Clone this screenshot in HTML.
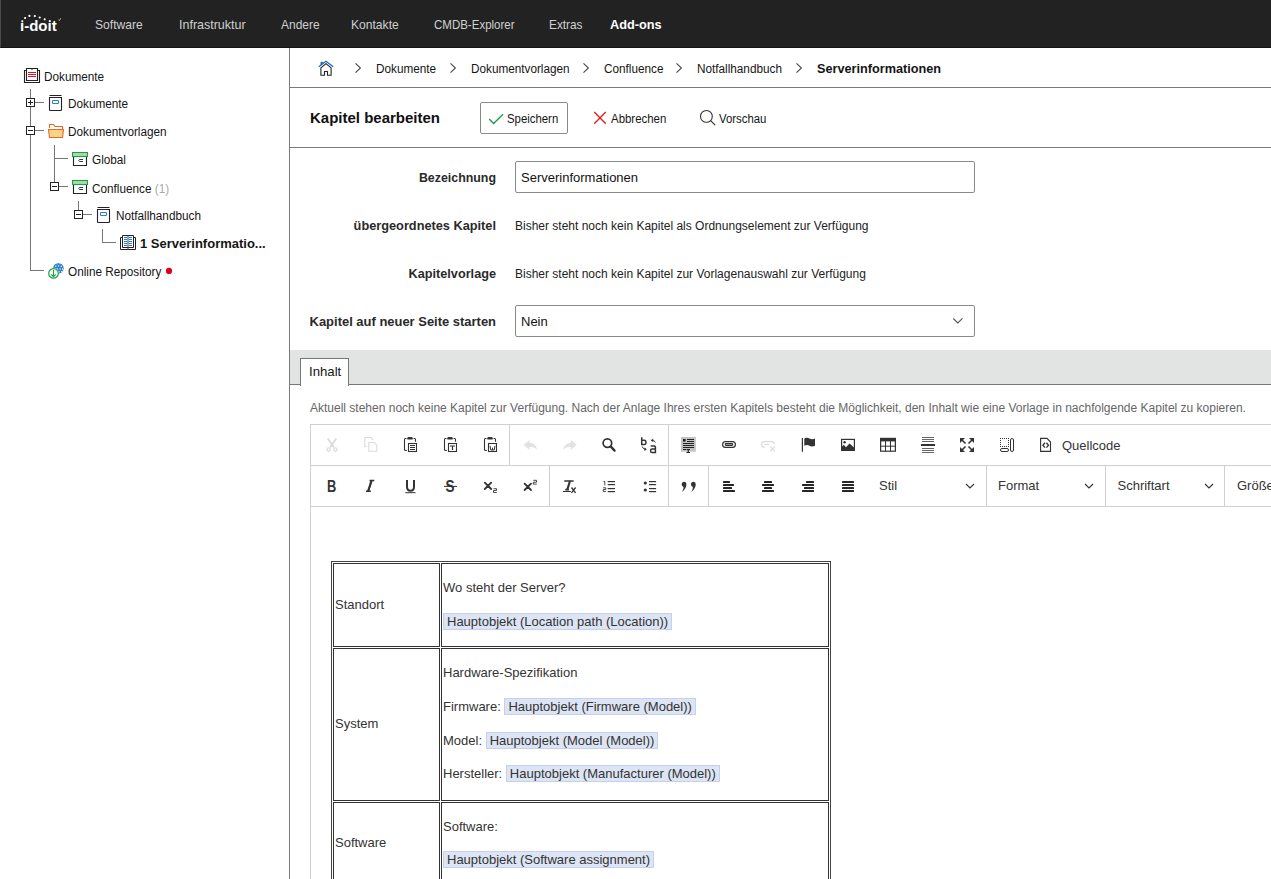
<!DOCTYPE html>
<html><head><meta charset="utf-8">
<style>
*{box-sizing:border-box;margin:0;padding:0}
html,body{width:1271px;height:879px;overflow:hidden;background:#fff;font-family:"Liberation Sans",sans-serif;color:#222}
.a{position:absolute;white-space:nowrap}
#nav{position:absolute;left:0;top:0;width:1271px;height:48px;background:#222;border-left:1px solid #4a4a4a;border-bottom:1px solid #131313;z-index:6}
#nav .it{position:absolute;top:18px;font-size:13px;color:#d0d0d0;line-height:14px;transform:scaleX(.9);transform-origin:0 0}
#side{position:absolute;left:0;top:47px;width:289px;height:832px;background:#fff}
#vline{position:absolute;left:289px;top:47px;width:1px;height:832px;background:#7a7a7a}
.hl{position:absolute;height:1px;background:#7a7a7a}
.t{position:absolute;font-size:12.5px;line-height:14px;color:#151515;white-space:nowrap;transform:scaleX(.94);transform-origin:0 0}
.lbl{position:absolute;font-size:12.4px;font-weight:bold;line-height:14px;color:#2a2a2a;text-align:right;white-space:nowrap}
.val{position:absolute;font-size:12px;line-height:14px;color:#222;white-space:nowrap}
.inp{position:absolute;border:1px solid #8a8a8a;border-radius:2px;background:#fff}

#ed{position:absolute;left:331px;top:561px;border:1px solid #444;border-spacing:1px;font-family:"Liberation Sans",sans-serif;font-size:13px;line-height:1.6;color:#333;background:#fff}
#ed td{border:1px solid #333;padding:1px;vertical-align:middle}
#ed p{margin:13px 0;white-space:nowrap}
#ed .ph{background:#dde5f4;border:1px solid #c3d1ee;padding:0 3px}
</style></head>
<body>
<div id="nav">
  <svg class="a" style="left:0;top:0" width="80" height="47" viewBox="0 0 80 47">
  <text x="19" y="31" font-family="Liberation Sans" font-weight="bold" font-size="15" fill="#fff">ı-doıt</text>
  <g fill="#fff"><circle cx="21.3" cy="21.3" r="1.1"/><circle cx="24.1" cy="18" r="1.1"/><circle cx="28.4" cy="15.9" r="1.1"/><circle cx="33.8" cy="16.1" r="1.1"/><circle cx="38.7" cy="17.5" r="1.1"/><circle cx="43.7" cy="19.3" r="1.1"/><circle cx="48.8" cy="21.2" r="1.1"/></g>
  <path d="M57.6 19.6L58.4 20.6L59.8 18.2" fill="none" stroke="#ddd" stroke-width="0.7"/>
</svg>
  <div class="it" style="left:94px;transform:scaleX(.93)">Software</div>
  <div class="it" style="left:177.5px;transform:scaleX(.96)">Infrastruktur</div>
  <div class="it" style="left:279.5px;transform:scaleX(.92)">Andere</div>
  <div class="it" style="left:350px;transform:scaleX(.93)">Kontakte</div>
  <div class="it" style="left:432.5px;transform:scaleX(.885)">CMDB-Explorer</div>
  <div class="it" style="left:547.5px;transform:scaleX(.91)">Extras</div>
  <div class="it" style="left:608.5px;color:#fff;font-weight:bold;transform:scaleX(.98)">Add-ons</div>
</div>
<div id="side"></div>
<div id="vline"></div>
<!-- sidebar tree -->
<svg class="a" style="left:0;top:0" width="289" height="300" viewBox="0 0 289 300" shape-rendering="crispEdges">
 <g fill="#777">
  <rect x="30" y="89" width="1" height="9"/><rect x="30" y="107" width="1" height="19"/><rect x="30" y="135" width="1" height="136"/>
  <rect x="35" y="102" width="9" height="1"/><rect x="35" y="130" width="9" height="1"/><rect x="31" y="270" width="13" height="1"/>
  <rect x="54" y="145" width="1" height="37"/><rect x="55" y="158" width="13" height="1"/><rect x="59" y="186" width="9" height="1"/>
  <rect x="78" y="201" width="1" height="9"/><rect x="83" y="214" width="9" height="1"/>
  <rect x="102" y="229" width="1" height="14"/><rect x="103" y="242" width="13" height="1"/>
 </g>
 <g fill="none" stroke="#222" stroke-width="1">
  <rect x="26.5" y="98.5" width="8" height="8"/><rect x="26.5" y="126.5" width="8" height="8"/>
  <rect x="50.5" y="182.5" width="8" height="8"/><rect x="74.5" y="210.5" width="8" height="8"/>
 </g>
 <g fill="#222">
  <rect x="28" y="102" width="5" height="1"/><rect x="30" y="100" width="1" height="5"/>
  <rect x="28" y="130" width="5" height="1"/><rect x="52" y="186" width="5" height="1"/><rect x="76" y="214" width="5" height="1"/>
 </g>
</svg>
<svg class="a" style="left:0;top:0" width="289" height="300" viewBox="0 0 289 300">
 <!-- root book -->
 <g fill="none" stroke="#222" stroke-width="1.1">
  <path d="M26.5 70.5 H24.5 V82.5 H39.5 V70.5 H37.5"/>
  <path d="M26.5 68.5 H31.5 L32 69.3 L32.5 68.5 H37.5 V80.5 H26.5 Z"/>
 </g>
 <g stroke="#e0101e" stroke-width="1.2"><path d="M28 72.5H36M28 74.5H36M28 76.5H36"/></g>
 <!-- doc icons -->
 <g fill="none" stroke="#222" stroke-width="1.1">
  <path d="M49.5 95.5H61.5M49.5 97.5H61.5V109.5Q61.5 110.5 60.5 110.5H50.5Q49.5 110.5 49.5 109.5Z"/>
  <path d="M97.5 207.5H109.5M97.5 209.5H109.5V221.5Q109.5 222.5 108.5 222.5H98.5Q97.5 222.5 97.5 221.5Z"/>
 </g>
 <g fill="none" stroke="#2a80d0" stroke-width="1.1">
  <rect x="52.5" y="100.5" width="6" height="3" rx="0.8"/>
  <rect x="100.5" y="212.5" width="6" height="3" rx="0.8"/>
 </g>
 <!-- folder -->
 <path d="M49.5 128V124.5H53.5L55 126.5H62.5V129" fill="none" stroke="#e86a25" stroke-width="1.1"/>
 <path d="M48.5 129.5H63.5L62.5 137.5H49.5Z" fill="#f6d58a" stroke="#e86a25" stroke-width="1.1"/>
 <!-- archive boxes -->
 <g>
  <rect x="72.5" y="152.5" width="15" height="4" fill="#a9d9b2" stroke="#1fa040" stroke-width="1.1"/>
  <path d="M73.5 157V165.5H86.5V157" fill="none" stroke="#222" stroke-width="1.1"/>
  <path d="M79.5 159.5H83M79.5 161.5H83M79.5 159.5Q78 160.5 79.5 161.5" fill="none" stroke="#222" stroke-width="0.9"/>
  <rect x="72.5" y="180.5" width="15" height="4" fill="#a9d9b2" stroke="#1fa040" stroke-width="1.1"/>
  <path d="M73.5 185V193.5H86.5V185" fill="none" stroke="#222" stroke-width="1.1"/>
  <path d="M79.5 187.5H83M79.5 189.5H83M79.5 187.5Q78 188.5 79.5 189.5" fill="none" stroke="#222" stroke-width="0.9"/>
 </g>
 <!-- open book -->
 <g fill="none" stroke="#222" stroke-width="1">
  <path d="M122.5 237.5H120.5V249.5H135.5V237.5H133.5"/>
  <path d="M122.5 235.5H133.5V247.5H122.5Z"/>
 </g>
 <rect x="127.5" y="235.5" width="1" height="14" fill="#444"/>
 <g fill="#1f7fd0"><rect x="124" y="237" width="3" height="1"/><rect x="124" y="239" width="3" height="1"/><rect x="124" y="241" width="3" height="1"/><rect x="124" y="243" width="3" height="1"/><rect x="124" y="245" width="3" height="1"/>
 <rect x="129" y="237" width="3" height="1"/><rect x="129" y="239" width="3" height="1"/><rect x="129" y="241" width="3" height="1"/><rect x="129" y="243" width="3" height="1"/><rect x="129" y="245" width="3" height="1"/></g>
 <!-- online repo -->
 <circle cx="58.4" cy="268.3" r="5.3" fill="#2f7fcc"/>
 <g fill="#fff"><circle cx="55.8" cy="266.3" r="0.7"/><circle cx="58.6" cy="266" r="0.7"/><circle cx="61.3" cy="266.3" r="0.7"/><circle cx="57.3" cy="269" r="0.7"/><circle cx="60.1" cy="269" r="0.7"/><circle cx="62.6" cy="269" r="0.7"/><circle cx="59" cy="271.8" r="0.7"/><circle cx="61.6" cy="271.6" r="0.7"/><circle cx="57" cy="263.8" r="0.6"/><circle cx="60" cy="263.6" r="0.6"/></g>
 <circle cx="53.5" cy="273.4" r="5.6" fill="#fff"/>
 <circle cx="53.5" cy="273.4" r="4.8" fill="#fff" stroke="#22a046" stroke-width="1.2"/>
 <path d="M53.5 270V276.5M51.2 274.3L53.5 276.6L55.8 274.3" fill="none" stroke="#22a046" stroke-width="1.2"/>
 <circle cx="169" cy="270.9" r="3.1" fill="#e0001a"/>
</svg>
<div class="t" style="left:44px;top:69.5px">Dokumente</div>
<div class="t" style="left:68px;top:96.5px">Dokumente</div>
<div class="t" style="left:68px;top:124.5px">Dokumentvorlagen</div>
<div class="t" style="left:92px;top:153px">Global</div>
<div class="t" style="left:92px;top:182px">Confluence <span style="color:#aaa">(1)</span></div>
<div class="t" style="left:116px;top:208.5px">Notfallhandbuch</div>
<div class="t" style="left:140px;top:237px;font-weight:bold;font-size:13px;transform:none">1 Serverinformatio...</div>
<div class="t" style="left:68px;top:264.5px">Online Repository</div>



<svg class="a" style="left:0;top:0;z-index:5" width="1271" height="350" viewBox="0 0 1271 350">
 <!-- home -->
 <path d="M318.8 66.8L326 61.2L333.2 66.8" fill="none" stroke="#1e64b4" stroke-width="1.2"/>
 <path d="M321 65V62.3H323.2" fill="#1e64b4" stroke="#1e64b4" stroke-width="1"/>
 <path d="M320.9 67.9L326 63.6L331.1 67.9V75.3H327.5V71.5H324.5V75.3H320.9Z" fill="none" stroke="#222" stroke-width="1.1" stroke-linejoin="round"/>
 <!-- chevrons -->
 <g fill="none" stroke="#444" stroke-width="1.05">
  <path d="M355.5 63.3L360.4 68L355.5 72.7"/>
  <path d="M450.5 63.3L455.4 68L450.5 72.7"/>
  <path d="M583.5 63.3L588.4 68L583.5 72.7"/>
  <path d="M676.5 63.3L681.4 68L676.5 72.7"/>
  <path d="M796.5 63.3L801.4 68L796.5 72.7"/>
 </g>
 <!-- check -->
 <path d="M489.2 119L493.6 123.5L503 114.2" fill="none" stroke="#1b9c48" stroke-width="1.3"/>
 <!-- X -->
 <path d="M594.2 112L605.8 123.8M605.8 112L594.2 123.8" fill="none" stroke="#e31e24" stroke-width="1.35"/>
 <!-- magnifier -->
 <circle cx="706.4" cy="116.4" r="5.9" fill="none" stroke="#333" stroke-width="1.1"/>
 <path d="M710.6 120.6L715.2 125.2" stroke="#333" stroke-width="1.2"/>
 <!-- select chevron -->
 <path d="M953.3 318.5L957.8 323L962.5 318.3" fill="none" stroke="#555" stroke-width="1.1"/>
</svg>
<!-- breadcrumb -->
<div class="hl" style="left:290px;top:87px;width:981px"></div>
<div class="t" style="left:376px;top:62px">Dokumente</div>
<div class="t" style="left:471px;top:62px">Dokumentvorlagen</div>
<div class="t" style="left:604px;top:62px">Confluence</div>
<div class="t" style="left:697px;top:62px">Notfallhandbuch</div>
<div class="t" style="left:817px;top:62px;font-weight:bold;font-size:12.7px;transform:none">Serverinformationen</div>

<!-- header -->
<div class="hl" style="left:290px;top:147px;width:981px"></div>
<div class="a" style="left:310px;top:109px;font-size:15px;font-weight:bold;color:#111">Kapitel bearbeiten</div>
<div class="inp" style="left:480px;top:102px;width:88px;height:32px"></div>
<div class="t" style="left:507px;top:112px;font-size:12.5px;transform:scaleX(.91)">Speichern</div>
<div class="t" style="left:611px;top:112px;font-size:12.5px;transform:scaleX(.915)">Abbrechen</div>
<div class="t" style="left:719px;top:112px;font-size:12.5px;transform:scaleX(.91)">Vorschau</div>

<!-- form -->
<div class="lbl" style="right:775px;top:171px">Bezeichnung</div>
<div class="inp" style="left:515px;top:161px;width:460px;height:32px"></div>
<div class="val" style="left:521px;top:171px;font-size:13px;color:#111">Serverinformationen</div>
<div class="lbl" style="right:775px;top:219px;font-size:12.76px">übergeordnetes Kapitel</div>
<div class="val" style="left:515px;top:219px">Bisher steht noch kein Kapitel als Ordnungselement zur Verfügung</div>
<div class="lbl" style="right:775px;top:267px;font-size:12.7px">Kapitelvorlage</div>
<div class="val" style="left:515px;top:267px">Bisher steht noch kein Kapitel zur Vorlagenauswahl zur Verfügung</div>
<div class="lbl" style="right:775px;top:315px;font-size:12.96px">Kapitel auf neuer Seite starten</div>
<div class="inp" style="left:515px;top:305px;width:460px;height:32px"></div>
<div class="val" style="left:521px;top:315px;font-size:13px;color:#111">Nein</div>

<!-- tab band -->
<div class="a" style="left:290px;top:350px;width:981px;height:35px;background:#e2e3e3;border-bottom:1px solid #777"></div>
<div class="a" style="left:300px;top:358px;width:49px;height:28px;background:#fff;border:1px solid #777;border-bottom:none"></div>
<div class="t" style="left:309px;top:365px;transform:none;font-size:13.2px">Inhalt</div>
<div class="val" style="left:310px;top:401px;color:#666">Aktuell stehen noch keine Kapitel zur Verfügung. Nach der Anlage Ihres ersten Kapitels besteht die Möglichkeit, den Inhalt wie eine Vorlage in nachfolgende Kapitel zu kopieren.</div>

<!-- editor -->
<div class="a" style="left:310px;top:424px;width:970px;height:460px;border:1px solid #d1d1d1"></div>
<div class="hl" style="left:310px;top:465px;width:961px;background:#d1d1d1"></div>
<div class="hl" style="left:310px;top:506px;width:961px;background:#d1d1d1"></div>


<table id="ed">
<tr style="line-height:20.5px"><td style="width:107px">Standort</td><td style="width:388px"><p>Wo steht der Server?</p><p><span class="ph">Hauptobjekt (Location path (Location))</span></p></td></tr>
<tr style="line-height:20.8px"><td>System</td><td style="padding-bottom:1.8px"><p>Hardware-Spezifikation</p><p>Firmware: <span class="ph">Hauptobjekt (Firmware (Model))</span></p><p>Model: <span class="ph">Hauptobjekt (Model (Model))</span></p><p>Hersteller: <span class="ph">Hauptobjekt (Manufacturer (Model))</span></p></td></tr>
<tr style="line-height:20.5px"><td style="padding-bottom:3px">Software</td><td><p>Software:</p><p><span class="ph">Hauptobjekt (Software assignment)</span></p></td></tr>
</table>
<!-- toolbar -->
<svg class="a" style="left:0;top:0;z-index:5" width="1271" height="510" viewBox="0 0 1271 510">
 <g fill="#d1d1d1">
  <rect x="509" y="425" width="1" height="40"/><rect x="668" y="425" width="1" height="40"/>
  <rect x="549" y="466" width="1" height="40"/><rect x="668" y="466" width="1" height="40"/><rect x="708" y="466" width="1" height="40"/>
  <rect x="986" y="466" width="1" height="40"/><rect x="1105" y="466" width="1" height="40"/><rect x="1224" y="466" width="1" height="40"/>
 </g>
 <!-- cut -->
 <g fill="none" stroke="#dcdcdc" stroke-width="1.3">
  <path d="M327.8 438.5L334 447.5M336.2 438.5L330 447.5" stroke-width="1.9"/>
  <circle cx="328.6" cy="449.6" r="1.7"/><circle cx="335.4" cy="449.6" r="1.7"/>
 </g>
 <!-- copy -->
 <g fill="none" stroke="#dcdcdc" stroke-width="1.1">
  <path d="M366.5 446.5H364.8V437.5H371L373.2 439.8"/>
  <path d="M368.8 442.5H374.3L376.8 445V451.3H368.8Z"/>
 </g>
 <g transform="translate(0,0)">
  <path d="M406.5 438.5H405.3Q404.5 438.5 404.5 439.5V449.5Q404.5 450.5 405.5 450.5H406.8" fill="none" stroke="#333" stroke-width="1.1"/>
  <path d="M413.5 438.5H414.7Q415.5 438.5 415.5 439.5V441.8" fill="none" stroke="#333" stroke-width="1.1"/>
  <path d="M407.3 439.6V438.2Q407.3 437 408.5 437H411.5Q412.7 437 412.7 438.2V439.6Z" fill="#333"/>
  <rect x="408.5" y="443.5" width="8" height="8" fill="#fff" stroke="#333" stroke-width="1.1"/>
  <g fill="#333"><rect x="410" y="445" width="5" height="1"/><rect x="410" y="447" width="5" height="1"/><rect x="410" y="449" width="5" height="1"/></g>
 </g><g transform="translate(40,0)">
  <path d="M406.5 438.5H405.3Q404.5 438.5 404.5 439.5V449.5Q404.5 450.5 405.5 450.5H406.8" fill="none" stroke="#333" stroke-width="1.1"/>
  <path d="M413.5 438.5H414.7Q415.5 438.5 415.5 439.5V441.8" fill="none" stroke="#333" stroke-width="1.1"/>
  <path d="M407.3 439.6V438.2Q407.3 437 408.5 437H411.5Q412.7 437 412.7 438.2V439.6Z" fill="#333"/>
  <rect x="408.5" y="443.5" width="8" height="8" fill="#fff" stroke="#333" stroke-width="1.1"/>
  <path d="M410 446H415M412.5 446V450" stroke="#333" stroke-width="1.2"/>
 </g><g transform="translate(80,0)">
  <path d="M406.5 438.5H405.3Q404.5 438.5 404.5 439.5V449.5Q404.5 450.5 405.5 450.5H406.8" fill="none" stroke="#333" stroke-width="1.1"/>
  <path d="M413.5 438.5H414.7Q415.5 438.5 415.5 439.5V441.8" fill="none" stroke="#333" stroke-width="1.1"/>
  <path d="M407.3 439.6V438.2Q407.3 437 408.5 437H411.5Q412.7 437 412.7 438.2V439.6Z" fill="#333"/>
  <rect x="408.5" y="443.5" width="8" height="8" fill="#fff" stroke="#333" stroke-width="1.1"/>
  <path d="M410 445.8L410.8 450H412.5V447.8V450H414.2L415 445.8" fill="none" stroke="#333" stroke-width="1"/>
 </g>
 <!-- undo / redo -->
 <path d="M523.5 444.7L529.4 440V442.8Q535.5 442.9 537 449.6Q534 446.6 529.4 446.9V450Z" fill="#e2e2e2"/>
 <path d="M576.7 444.7L570.8 440V442.8Q564.7 442.9 563.2 449.6Q566.2 446.6 570.8 446.9V450Z" fill="#e2e2e2"/>
 <!-- find -->
 <circle cx="607.4" cy="443.1" r="4.3" fill="none" stroke="#333" stroke-width="1.7"/>
 <path d="M610.8 446.6L614.6 450.6" stroke="#333" stroke-width="2.3" stroke-linecap="round"/>
 <!-- replace -->
 <path d="M641.7 437.2V444.6H644.2Q645.9 444.6 645.9 443V441.9Q645.9 440.3 644.2 440.3H641.7" fill="none" stroke="#333" stroke-width="1.5"/>
 <path d="M650.7 446.1H654.2Q655.4 446.1 655.4 447.3V452.6H652.2Q650.6 452.6 650.6 451V450.5Q650.6 449 652.2 449H655.4" fill="none" stroke="#333" stroke-width="1.5"/>
 <path d="M655.6 442.4Q654.6 440.5 651.6 440.3" fill="none" stroke="#333" stroke-width="1"/>
 <path d="M653.2 438.6L650.8 440.4L653.2 442.1Z" fill="#333"/>
 <path d="M642.2 446.5Q643 449.2 645.9 449.3" fill="none" stroke="#333" stroke-width="1"/>
 <path d="M644.4 447.5L646.8 449.3L644.4 451Z" fill="#333"/>
 <!-- templates -->
 <rect x="681" y="437" width="14.8" height="14.7" fill="#c3c3c3"/>
 <rect x="683" y="439" width="2.6" height="2.6" fill="#222"/>
 <g fill="#222"><rect x="687" y="439" width="7" height="1"/><rect x="687" y="441" width="7" height="1"/><rect x="683" y="443" width="11" height="1"/><rect x="683" y="445" width="11" height="1"/><rect x="683" y="447" width="11" height="1"/><rect x="683" y="449" width="3" height="1"/></g>
 <g fill="#222"><rect x="686.5" y="449" width="3.5" height="1"/><rect x="687.7" y="449.5" width="1.1" height="3"/><rect x="686.5" y="452" width="3.5" height="1"/></g>
 <!-- link -->
 <g fill="none" stroke="#333" stroke-width="1.2">
  <rect x="722.6" y="441.6" width="12.8" height="5.8" rx="2.9"/>
  <rect x="725.3" y="443.7" width="7.4" height="1.6" rx="0.8"/>
 </g>
 <!-- unlink -->
 <g fill="none" stroke="#dcdcdc" stroke-width="1.2">
  <path d="M764.8 447.4H764.5Q761.6 447.4 761.6 444.5Q761.6 441.6 764.5 441.6H771.5Q774.4 441.6 774.4 444.5"/>
  <path d="M764.5 444.5H769"/>
  <path d="M770.3 446.6L774.8 451.1M774.8 446.6L770.3 451.1" stroke-width="1.3"/>
 </g>
 <!-- anchor -->
 <path d="M802.4 438V451.7" stroke="#333" stroke-width="1.2"/>
 <path d="M804.3 438.6Q807 437 809.5 438.6Q812 440 815 438.6V445.8Q812 447.2 809.5 445.8Q807 444.4 804.3 445.8Z" fill="#333"/>
 <!-- image -->
 <rect x="841.6" y="439.4" width="12.8" height="11" fill="none" stroke="#333" stroke-width="1.2"/>
 <circle cx="844.6" cy="442.2" r="1.2" fill="#333"/>
 <path d="M842 450V446.5L843.8 444.8L846 447.3L849.5 443.5L854 447.5V450Z" fill="#333"/>
 <!-- table -->
 <rect x="880.6" y="438.4" width="14.8" height="12.8" fill="none" stroke="#333" stroke-width="1.2"/>
 <rect x="880.6" y="438.4" width="14.8" height="3" fill="#333"/>
 <path d="M880.6 446.2H895.4M885.5 441V451M890.5 441V451" stroke="#333" stroke-width="1"/>
 <!-- hr -->
 <g fill="#666"><rect x="922" y="437" width="12" height="1"/><rect x="922" y="439" width="12" height="1"/><rect x="922" y="441" width="12" height="1"/>
 <rect x="922" y="448" width="12" height="1"/><rect x="922" y="450" width="12" height="1"/><rect x="922" y="452" width="12" height="1"/></g>
 <rect x="921" y="444" width="14" height="2" fill="#333"/>
 <!-- maximize -->
 <g stroke="#333" stroke-width="1.6" fill="none">
  <path d="M961.5 439.5L965.5 443.5M972.5 439.5L968.5 443.5M961.5 450.5L965.5 446.5M972.5 450.5L968.5 446.5"/>
 </g>
 <g fill="#333">
  <path d="M960 438H965L960 443Z"/><path d="M974 438H969L974 443Z"/>
  <path d="M960 452H965L960 447Z"/><path d="M974 452H969L974 447Z"/>
 </g>
 <!-- showblocks -->
 <g fill="#333">
  <rect x="1000" y="438" width="1" height="1"/><rect x="1002" y="438" width="1" height="1"/><rect x="1004" y="438" width="1" height="1"/><rect x="1006" y="438" width="1" height="1"/><rect x="1008" y="438" width="1" height="1"/>
  <rect x="1000" y="440" width="1" height="1"/><rect x="1000" y="442" width="1" height="1"/><rect x="1000" y="444" width="1" height="1"/><rect x="1000" y="446" width="1" height="1"/>
  <rect x="1008" y="440" width="1" height="1"/><rect x="1008" y="442" width="1" height="1"/><rect x="1008" y="444" width="1" height="1"/><rect x="1008" y="446" width="1" height="1"/>
  <rect x="1002" y="446" width="1" height="1"/><rect x="1004" y="446" width="1" height="1"/><rect x="1006" y="446" width="1" height="1"/>
 </g>
 <rect x="1000.5" y="448.5" width="8" height="3" rx="1.5" fill="none" stroke="#333" stroke-width="1"/>
 <rect x="1010.5" y="438.5" width="3" height="13" rx="1.5" fill="none" stroke="#333" stroke-width="1"/>
 <!-- source -->
 <path d="M1040.6 438.4H1047L1050.5 442V451.4H1040.6Z" fill="none" stroke="#333" stroke-width="1.1"/>
 <path d="M1045 442.8L1042.9 445.2L1045 447.6M1046.4 442.8L1048.5 445.2L1046.4 447.6" fill="none" stroke="#333" stroke-width="1.3"/>
 <text x="1062" y="450" font-family="Liberation Sans" font-size="13" fill="#333">Quellcode</text>

 <!-- row 2 -->
 <text x="327" y="491.7" font-family="Liberation Sans" font-weight="bold" font-size="16" fill="#333" textLength="9.3" lengthAdjust="spacingAndGlyphs">B</text>
 <path d="M369.5 480.5H374.3M366 491.3H370.8M371.9 480.5L368.4 491.3" stroke="#333" stroke-width="1.5" fill="none"/>
 <path d="M371.5 480.5L368 491.3" stroke="#333" stroke-width="2" fill="none"/>
 <path d="M407 480V486.5Q407 490.8 410.5 490.8Q414 490.8 414 486.5V480" fill="none" stroke="#333" stroke-width="2"/>
 <path d="M405.3 492.7H415.5" stroke="#333" stroke-width="1"/>
 <text x="445.6" y="491.8" font-family="Liberation Sans" font-weight="bold" font-size="16" fill="#333" textLength="9" lengthAdjust="spacingAndGlyphs">S</text>
 <rect x="444" y="485.9" width="13" height="1" fill="#333"/>
 <path d="M484.8 482.6L491.2 489M491.2 482.6L484.8 489" stroke="#333" stroke-width="1.8" stroke-linecap="round"/>
 <path d="M493.5 488.7H496.5V490.5H493.5V492.5H496.8" fill="none" stroke="#333" stroke-width="0.9"/>
 <path d="M524.6 483.6L531 490M531 483.6L524.6 490" stroke="#333" stroke-width="1.8" stroke-linecap="round"/>
 <path d="M533.3 480.3H536.5V482.2H533.3V484.1H536.8" fill="none" stroke="#333" stroke-width="0.9"/>
 <!-- Tx -->
 <path d="M564.3 481H573.6M565.3 489.6H569" stroke="#333" stroke-width="1.7" fill="none"/><path d="M570 481L567.3 489.6" stroke="#333" stroke-width="2.1"/>
 <path d="M563 491.5H570.8" stroke="#333" stroke-width="1"/>
 <path d="M571.5 487.5L575.6 492.8M575.6 487.5L571.5 492.8" stroke="#333" stroke-width="1.3"/>
 <!-- ol -->
 <path d="M603.5 481.5H604.8V485.3" fill="none" stroke="#333" stroke-width="0.9"/>
 <path d="M603 487.8H605.8V489.5H603.2V491.4H606" fill="none" stroke="#333" stroke-width="0.9"/>
 <g fill="#333"><rect x="607.7" y="481" width="7.3" height="1.2"/><rect x="607.7" y="484" width="7.3" height="1.2"/><rect x="607.7" y="488" width="7.3" height="1.2"/><rect x="607.7" y="491" width="7.3" height="1.2"/></g>
 <!-- ul -->
 <circle cx="645.3" cy="483" r="1.6" fill="#333"/><circle cx="645.3" cy="490" r="1.6" fill="#333"/>
 <g fill="#333"><rect x="649" y="481" width="7.1" height="1.2"/><rect x="649" y="484" width="7.1" height="1.2"/><rect x="649" y="488" width="7.1" height="1.2"/><rect x="649" y="491" width="7.1" height="1.2"/></g>
 <!-- quote -->
 <path d="M684 481.8Q686.4 481.8 686.4 484.5Q686.4 488.5 682 491.9Q683.8 489 683.6 487Q681.6 486.6 681.6 484.3Q681.6 481.8 684 481.8Z" fill="#333"/>
 <path d="M693.3 481.8Q695.7 481.8 695.7 484.5Q695.7 488.5 691.3 491.9Q693.1 489 692.9 487Q690.9 486.6 690.9 484.3Q690.9 481.8 693.3 481.8Z" fill="#333"/>
 <!-- aligns -->
 <g fill="#262626"><rect x="723" y="481" width="7" height="2" rx="0.5"/><rect x="723" y="484" width="11" height="2" rx="0.5"/><rect x="723" y="487" width="9" height="2" rx="0.5"/><rect x="723" y="490" width="12" height="2" rx="0.5"/><rect x="764" y="481" width="8" height="2" rx="0.5"/><rect x="762" y="484" width="12" height="2" rx="0.5"/><rect x="764" y="487" width="8" height="2" rx="0.5"/><rect x="762" y="490" width="12" height="2" rx="0.5"/><rect x="806" y="481" width="8" height="2" rx="0.5"/><rect x="802" y="484" width="12" height="2" rx="0.5"/><rect x="804" y="487" width="10" height="2" rx="0.5"/><rect x="802" y="490" width="12" height="2" rx="0.5"/><rect x="842" y="481" width="12" height="2" rx="0.5"/><rect x="842" y="484" width="12" height="2" rx="0.5"/><rect x="842" y="487" width="12" height="2" rx="0.5"/><rect x="842" y="490" width="12" height="2" rx="0.5"/></g>
 <!-- combos -->
 <g font-family="Liberation Sans" font-size="13" fill="#333">
  <text x="879" y="490.2">Stil</text><text x="998" y="490.2">Format</text><text x="1117.5" y="490.2">Schriftart</text><text x="1237" y="490.2">Größe</text>
 </g>
 <g fill="none" stroke="#333" stroke-width="1.1">
  <path d="M966 484L970 488L974 484"/><path d="M1085 484L1089 488L1093 484"/><path d="M1205 484L1209 488L1213 484"/>
 </g>
</svg>
</body></html>
